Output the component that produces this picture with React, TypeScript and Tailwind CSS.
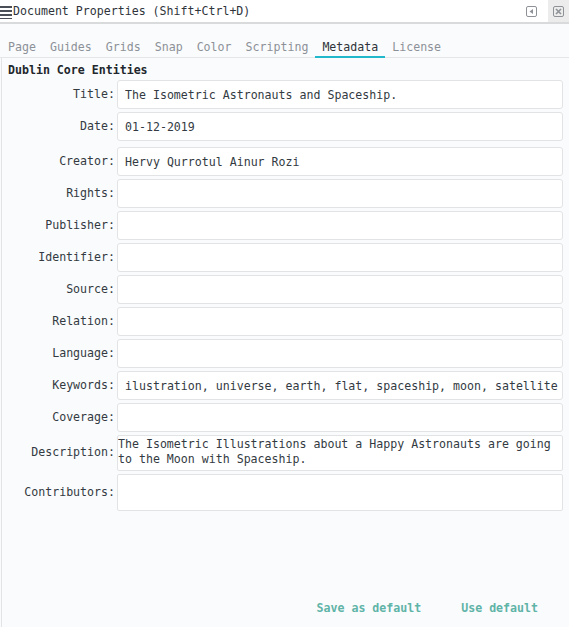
import React from 'react';

const tabs = ['Page', 'Guides', 'Grids', 'Snap', 'Color', 'Scripting', 'Metadata', 'License'];

const fields: { label: string; value?: string; kind?: 'text' | 'area'; extra?: string }[] = [
  { label: 'Title', value: 'The Isometric Astronauts and Spaceship.' },
  { label: 'Date', value: '01-12-2019' },
  { label: 'Creator', value: 'Hervy Qurrotul Ainur Rozi', extra: 'mt-[3px]' },
  { label: 'Rights' },
  { label: 'Publisher' },
  { label: 'Identifier' },
  { label: 'Source' },
  { label: 'Relation' },
  { label: 'Language' },
  { label: 'Keywords', value: 'ilustration, universe, earth, flat, spaceship, moon, satellite' },
  { label: 'Coverage' },
  {
    label: 'Description',
    kind: 'area',
    value: 'The Isometric Illustrations about a Happy Astronauts are going to the Moon with Spaceship.',
  },
  { label: 'Contributors', kind: 'area' },
];

function Hamburger() {
  return (
    <svg width="12" height="14" viewBox="0 0 12 14" className="shrink-0">
      <rect x="0" y="1" width="12" height="2" fill="#4a4f57" />
      <rect x="0" y="5" width="12" height="2" fill="#4a4f57" />
      <rect x="0" y="9" width="12" height="2" fill="#4a4f57" />
      <rect x="0" y="13" width="12" height="1.5" fill="#4a4f57" />
    </svg>
  );
}

export default function App() {
  return (
    <div
      className="w-[569px] h-[627px] flex flex-col bg-[#fafbfc] text-[#333a42] text-[11.6px] overflow-hidden"
      style={{ fontFamily: '"DejaVu Sans Mono", "Liberation Mono", monospace' }}
    >
      {/* title bar */}
      <div className="h-[24px] flex items-stretch bg-white border-b-2 border-[#d9dadb] shrink-0">
        <div className="flex items-center gap-px pt-px flex-1">
          <Hamburger />
          <span className="text-[#2f343a]">Document Properties (Shift+Ctrl+D)</span>
        </div>
        <div className="w-[34px] flex items-center justify-center">
          <svg width="11" height="11" viewBox="0 0 11 11">
            <rect x="0.5" y="0.5" width="10" height="10" rx="1.5" fill="none" stroke="#8e9297" />
            <path d="M7 3 L3.5 5.5 L7 8 Z" fill="#8e9297" />
          </svg>
        </div>
        <div className="w-[21px] bg-[#ececec] flex items-center justify-center">
          <svg width="11" height="11" viewBox="0 0 11 11">
            <rect x="0.5" y="0.5" width="10" height="10" rx="1.5" fill="none" stroke="#8e9297" />
            <path d="M3 3 L8 8 M8 3 L3 8" stroke="#8e9297" strokeWidth="1.6" />
          </svg>
        </div>
      </div>

      {/* tabs */}
      <div className="mt-[14px] flex pl-px border-b border-[#e4e6e8] h-[20px] shrink-0">
        {tabs.map((t) => (
          <div
            key={t}
            className={
              t === 'Metadata'
                ? 'px-[7px] h-[20px] leading-[19px] text-[#2f343a] border-b-2 border-[#22b8cc]'
                : 'px-[7px] h-[20px] leading-[19px] text-[#8c9198]'
            }
          >
            {t}
          </div>
        ))}
      </div>

      {/* content */}
      <div className="flex-1 flex flex-col ml-px border-l border-[#e2e4e6] pr-[6px]">
        <div className="pl-[6px] pt-[4px] h-[22px] font-bold text-[#22272d]">Dublin Core Entities</div>

        <div className="flex flex-col gap-[3px]">
          {fields.map((f) => (
            <div key={f.label} className={`flex items-center ${f.extra ?? ''}`}>
              <label className="w-[115px] pr-[2px] text-right shrink-0">{f.label}:</label>
              {f.kind === 'area' ? (
                <textarea
                  readOnly
                  defaultValue={f.value ?? ''}
                  className={`flex-1 ${f.label === 'Description' ? 'h-[36px]' : 'h-[37px]'} bg-white border border-[#e1e3e5] rounded-[2px] px-0 pt-px leading-[15px] resize-none outline-none overflow-hidden`}
                />
              ) : (
                <input
                  readOnly
                  defaultValue={f.value ?? ''}
                  className="flex-1 h-[29px] bg-white border border-[#e1e3e5] rounded-[3px] pl-[7px] pr-0 outline-none"
                />
              )}
            </div>
          ))}
        </div>

        <div className="mt-auto mb-[10px] flex justify-end gap-[40px] pr-[25px] font-bold text-[#5fb4a8]">
          <button type="button">Save as default</button>
          <button type="button">Use default</button>
        </div>
      </div>
    </div>
  );
}
